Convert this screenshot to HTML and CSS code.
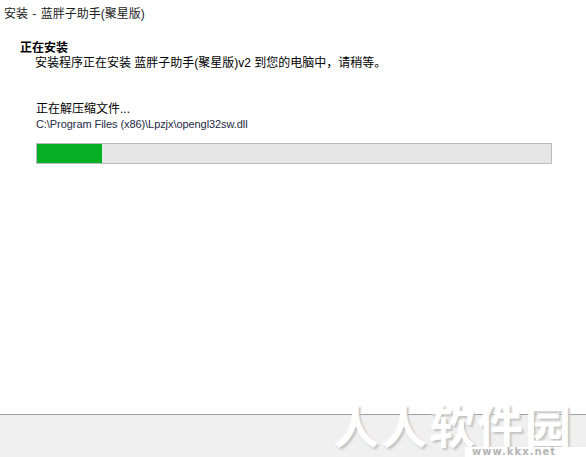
FILE: index.html
```html
<!DOCTYPE html>
<html lang="zh-CN">
<head>
  <meta charset="UTF-8" />
  <meta name="viewport" content="width=device-width, initial-scale=1.0" />
  <title>安装 - 蓝胖子助手(聚星版)</title>
  <link rel="stylesheet" href="styles.css">
</head>
<body>
  <div class="window">
    <div class="titlebar">安装 - 蓝胖子助手(聚星版)</div>
    <div class="header">
      <h1>正在安装</h1>
      <p>安装程序正在安装 蓝胖子助手(聚星版)v2 到您的电脑中，请稍等。</p>
    </div>
    <div class="content">
      <div class="status">正在解压缩文件...</div>
      <div class="file">C:\Program Files (x86)\Lpzjx\opengl32sw.dll</div>
      <div class="progress">
        <div class="progress-fill" style="width: 65px"></div>
      </div>
    </div>
    <div class="footer"></div>
  </div>

  <div class="watermark">
    <div class="mark-name">人人软件园</div>
    <div class="mark-url">www.kkx.net</div>
  </div>
</body>
</html>
```

FILE: styles.css
```css
html, body {
  margin: 0;
  padding: 0;
  height: 100%;
}
body {
  background: white;
  color: #000;
  font-family: 'Liberation Sans', 'Noto Sans CJK SC', sans-serif;
  font-size: 12px;
  overflow: hidden;
}
.window {
  height: 457px;
  display: flex;
  flex-direction: column;
}
.titlebar {
  height: 14px;
  line-height: 14px;
  padding: 7px 0 0 4px;
  color: #222;
  word-spacing: 1px;
}
.header {
  padding: 20px 0 0 20px;
}
.header h1 {
  margin: 0;
  font-size: 12px;
  line-height: 14px;
  font-weight: bold;
}
.header p {
  margin: 1px 0 0 15px;
  line-height: 14px;
}
.content {
  flex: 1;
  padding: 32px 34px 0 36px;
}
.status {
  line-height: 14px;
}
.file {
  margin-top: 2px;
  font-size: 11px;
  line-height: 13px;
  letter-spacing: -0.07px;
  color: #222a44;
}
.progress {
  margin-top: 12px;
  height: 19px;
  background: #e6e6e6;
  border: 1px solid #bcbcbc;
}
.progress-fill {
  height: 100%;
  background: #06b025;
}
.footer {
  height: 42px;
  background: #f0f0f0;
  border-top: 1px solid #a0a0a0;
}
.watermark {
  position: absolute;
  right: 0;
  bottom: 0;
  width: 253px;
  height: 62px;
}
.mark-name {
  position: absolute;
  left: 0;
  top: 5px;
  font-family: 'Noto Sans CJK SC', sans-serif;
  font-size: 46px;
  line-height: 46px;
  font-weight: bold;
  letter-spacing: 2px;
  white-space: nowrap;
  color: white;
  text-shadow: 2px 2px 2px #c4c4c4;
}
.mark-url {
  position: absolute;
  right: 0;
  bottom: 0;
  width: 114px;
  height: 10px;
  padding-left: 7px;
  background: white;
  font-family: 'DejaVu Sans', sans-serif;
  font-size: 10px;
  line-height: 10px;
  font-weight: bold;
  letter-spacing: 1px;
  color: #b4b4b4;
}
```
